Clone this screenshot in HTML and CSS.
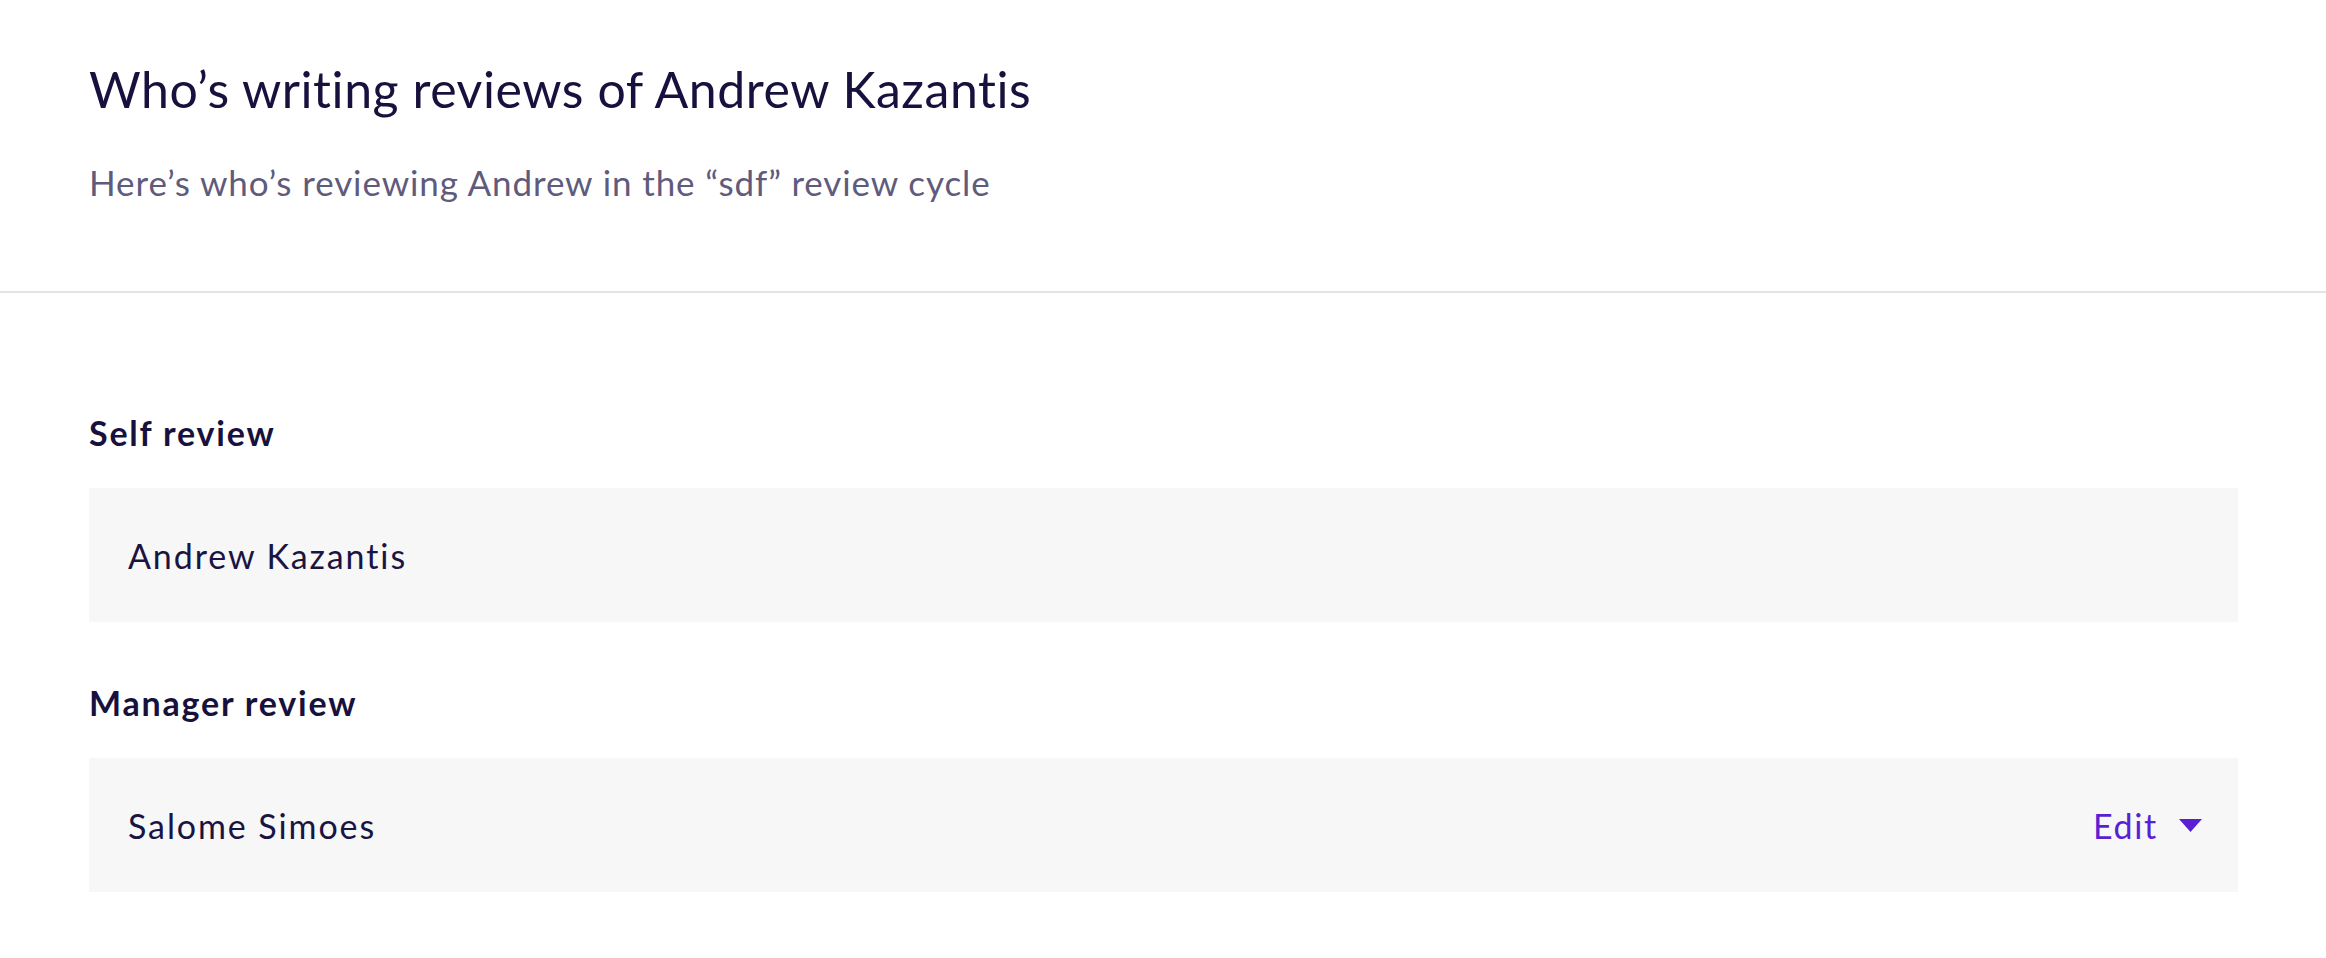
FILE: index.html
```html
<!DOCTYPE html>
<html lang="en">
<head>
<meta charset="utf-8">
<title>Who’s writing reviews of Andrew Kazantis</title>
<link rel="stylesheet" href="styles.css">
</head>
<body>
  <header class="page-header">
    <h1 class="title">Who’s writing reviews of Andrew Kazantis</h1>
    <p class="subtitle">Here’s who’s reviewing Andrew in the “sdf” review cycle</p>
  </header>
  <main class="content">
    <section class="group">
      <h2 class="group-label">Self review</h2>
      <div class="row">
        <span class="name">Andrew Kazantis</span>
      </div>
    </section>
    <section class="group">
      <h2 class="group-label">Manager review</h2>
      <div class="row">
        <span class="name">Salome Simoes</span>
        <button class="edit" type="button">
          <span>Edit</span>
          <svg class="caret" width="23" height="13" viewBox="0 0 23 13" aria-hidden="true"><path d="M0 0 H23 L11.5 13 Z" fill="currentColor"/></svg>
        </button>
      </div>
    </section>
  </main>
</body>
</html>
```
FILE: styles.css
```css
* { box-sizing: border-box; }
html, body { margin: 0; padding: 0; background: #ffffff; }
body {
  font-family: Lato, "Noto Sans", sans-serif;
  color: #1a1442;
}
.page-header {
  padding: 59px 89px 87px;
  border-bottom: 2px solid #e4e4e6;
}
.title {
  margin: 0;
  font-size: 50px;
  line-height: 60px;
  font-weight: 400;
  letter-spacing: 0.55px;
  color: #17113d;
}
.subtitle {
  margin: 41px 0 0;
  font-size: 35px;
  line-height: 44px;
  letter-spacing: 0.9px;
  color: #5f5b7d;
}
.content {
  padding: 118px 88px 0 89px;
}
.group + .group { margin-top: 59px; }
.group-label {
  margin: 0 0 33px;
  font-size: 34px;
  line-height: 44px;
  font-weight: 700;
  letter-spacing: 1.8px;
  color: #17113d;
}
.row {
  height: 134px;
  background: #f7f7f7;
  padding: 0 36px 0 39px;
  display: flex;
  align-items: center;
  justify-content: space-between;
}
.name {
  font-size: 34px;
  letter-spacing: 1.9px;
  color: #1a1442;
}
.edit {
  display: flex;
  align-items: center;
  gap: 21px;
  border: 0;
  background: none;
  padding: 0;
  font: inherit;
  font-size: 34px;
  letter-spacing: 1.7px;
  color: #5b1fd3;
  cursor: pointer;
}
.caret { display: block; }
```
